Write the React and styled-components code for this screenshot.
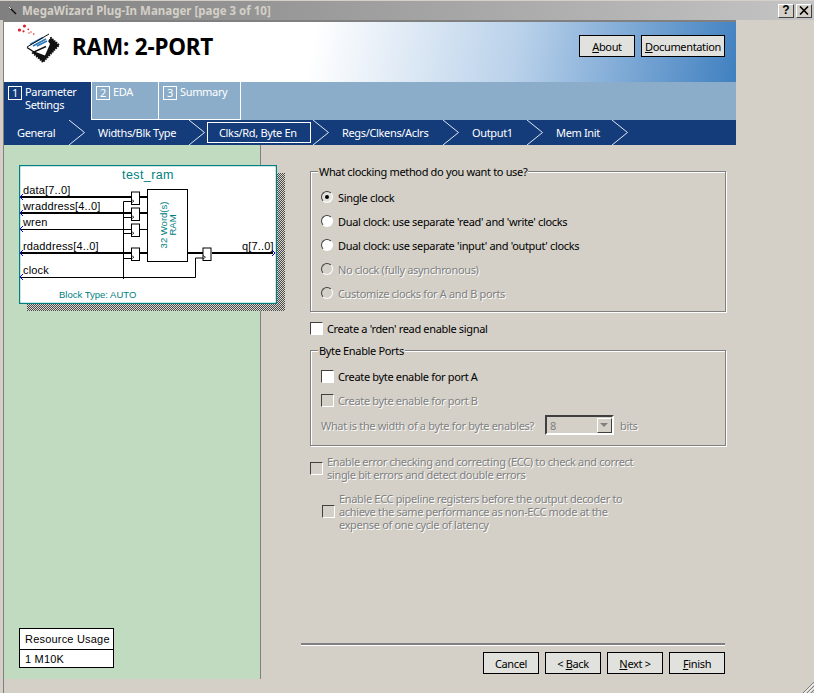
import React from "react";
import styled, { createGlobalStyle } from "styled-components";

const GlobalStyle = createGlobalStyle`
  html, body {
    margin: 0;
    padding: 0;
    background: #d4d0c8;
  }
  body {
    font-family: "Noto Sans", "Liberation Sans", sans-serif;
    font-size: 11px;
    letter-spacing: -0.34px;
    color: #000;
  }
`;

const Window = styled.div`
  width: 814px;
  height: 693px;
  box-sizing: border-box;
  display: flex;
  flex-direction: column;
  overflow: hidden;
  position: relative;
  background: #d4d0c8;
`;

const TitleBar = styled.div`
  height: 20px;
  flex: none;
  display: flex;
  align-items: center;
  padding: 0 2px 0 8px;
  box-sizing: border-box;
  background: linear-gradient(90deg, #808080, #c4c4c4);
  border-top: 1px solid #d4d0c8;
`;

const TitleText = styled.span`
  margin-left: 5px;
  font-weight: 700;
  font-size: 11.5px;
  letter-spacing: 0;
  color: #d4d0c8;
  flex: 1;
`;

const CaptionButton = styled.button`
  width: 16px;
  height: 14px;
  padding: 0;
  margin-left: 2px;
  display: flex;
  align-items: center;
  justify-content: center;
  background: #d4d0c8;
  border: 1px solid;
  border-color: #fff #404040 #404040 #fff;
  font: 700 12px "Liberation Sans", sans-serif;
  line-height: 11px;
  color: #000;
`;

const Frame = styled.div`
  flex: 1;
  margin-left: 3px;
  border-left: 1px solid #808080;
  border-top: 2px solid #808080;
  display: flex;
  flex-direction: column;
  width: 732px;
`;

const Header = styled.div`
  height: 60px;
  box-sizing: border-box;
  flex: none;
  display: flex;
  align-items: center;
  padding: 0 11px 12px 14px;
  background: linear-gradient(100deg, #fff 0, #fff 42%, #b9d1ea 70%, #4080c0 100%);
`;

const LogoSvg = styled.svg`
  align-self: flex-start;
  flex: none;
`;

const Heading = styled.h1`
  margin: 0 0 0 10px;
  flex: 1;
  font: 700 22.5px "Noto Sans", sans-serif;
  letter-spacing: -0.2px;
`;

const Button = styled.button`
  width: ${(p) => p.$w || 56}px;
  height: 22px;
  margin-left: 6px;
  padding: 0;
  background: #e1e2dd;
  border: 1px solid #000;
  font: inherit;
  letter-spacing: inherit;
  color: #000;
`;

const Key = styled.span`
  text-decoration: underline;
`;

const TabRow = styled.div`
  height: 38px;
  flex: none;
  display: flex;
  background: #8cadc9;
`;

const Tab = styled.div`
  width: ${(p) => p.$w}px;
  box-sizing: border-box;
  display: flex;
  gap: 3px;
  padding: 4px 0 0 4px;
  line-height: 13px;
  color: #fff;
  background: ${(p) => (p.$active ? "#143c7a" : "transparent")};
  border-right: ${(p) => (p.$active ? "none" : "1px solid #fff")};
  border-left: ${(p) => (p.$active ? "none" : "1px solid #fff")};
  border-bottom: ${(p) => (p.$active ? "none" : "1px solid #fff")};
  margin-left: ${(p) => (p.$active ? "0" : "-1px")};
  &:nth-child(2) {
    margin-left: 0;
  }
`;

const TabNumber = styled.span`
  width: 12px;
  height: 12px;
  flex: none;
  border: 1px solid #fff;
  text-align: center;
  font-size: 11px;
  line-height: 12px;
`;

const TabLabel = styled.div`
  margin-top: -1px;
`;

const NavRow = styled.div`
  height: 25px;
  flex: none;
  display: flex;
  align-items: center;
  background: #143c7a;
  color: #fff;
`;

const NavLabel = styled.div`
  width: ${(p) => p.$w}px;
  flex: none;
  box-sizing: border-box;
  height: ${(p) => (p.$active ? 21 : 25)}px;
  line-height: ${(p) => (p.$active ? 19 : 25)}px;
  padding-left: ${(p) => (p.$active ? 11 : 13)}px;
  margin: 0 ${(p) => (p.$active ? 2 : 0)}px;
  border: ${(p) => (p.$active ? "1px solid #fff" : "none")};
`;

const Chevron = styled.svg`
  width: 16px;
  height: 25px;
  flex: none;
`;

const Main = styled.div`
  flex: none;
  display: flex;
  height: 534px;
`;

const SidePane = styled.div`
  width: 257px;
  flex: none;
  box-sizing: border-box;
  background: #c0dbc0;
  border-right: 1px solid #808080;
  padding: 20px 0 11px 15px;
  display: flex;
  flex-direction: column;
  justify-content: space-between;
`;

const DiagramCard = styled.div`
  position: relative;
  width: 258px;
  height: 139px;
`;

const DiagramShadow = styled.div`
  position: absolute;
  left: 8px;
  top: 8px;
  width: 258px;
  height: 138px;
  background: repeating-conic-gradient(#4a4a4a 0 25%, #d8d8d0 0 50%) 0 0 / 2px 2px;
`;

const DiagramSvg = styled.svg`
  position: absolute;
  left: 0;
  top: 0;
  display: block;
  background: #fff;
`;

const UsageTable = styled.div`
  width: 95px;
  box-sizing: border-box;
  background: #fff;
  border: 1px solid #000;
  font: 11px "Liberation Sans", sans-serif;
  letter-spacing: 0.2px;
`;

const UsageHead = styled.div`
  height: 20px;
  line-height: 21px;
  padding-left: 5px;
  border-bottom: 1px solid #000;
`;

const UsageCell = styled.div`
  height: 17px;
  line-height: 18px;
  padding-left: 5px;
`;

const FormPane = styled.div`
  flex: 1;
  display: flex;
  flex-direction: column;
  padding: 26px 0 5px 49px;
  box-sizing: border-box;
`;

const Group = styled.div`
  position: relative;
  box-sizing: border-box;
  width: 416px;
  height: ${(p) => p.$h}px;
  margin-top: ${(p) => p.$mt || 0}px;
  padding: 13px 0 0 10px;
  border: 1px solid #808080;
  box-shadow: 1px 1px 0 #fff, inset 1px 1px 0 #fff;
`;

const Legend = styled.span`
  position: absolute;
  left: 7px;
  top: -8px;
  padding: 0 1px;
  background: #d4d0c8;
  line-height: 15px;
`;

const Row = styled.div`
  height: ${(p) => p.$h || 24}px;
  margin-top: ${(p) => p.$mt || 0}px;
  margin-left: ${(p) => p.$ml || 0}px;
  display: flex;
  align-items: center;
  gap: ${(p) => p.$gap || 5}px;
  color: ${(p) => (p.$off ? "#808080" : "#000")};
  text-shadow: ${(p) => (p.$off ? "1px 1px 0 #fff" : "none")};
  line-height: 13px;
`;

const RadioMark = styled.span`
  width: 12px;
  height: 12px;
  flex: none;
  box-sizing: border-box;
  border-radius: 50%;
  border: 1px solid;
  border-color: #404040 #fff #fff #404040;
  background: ${(p) => (p.$off ? "#d4d0c8" : p.$on ? "#e4e2dc" : "#fff")};
  display: flex;
  align-items: center;
  justify-content: center;
  &::after {
    content: "";
    width: 4px;
    height: 4px;
    border-radius: 50%;
    background: ${(p) => (p.$on ? "#000" : "transparent")};
  }
`;

const CheckMark = styled.span`
  width: 13px;
  height: 13px;
  flex: none;
  box-sizing: border-box;
  border: 1px solid;
  border-color: #404040 #fff #fff #404040;
  background: ${(p) => (p.$off ? "#d4d0c8" : "#fff")};
`;

const Combo = styled.div`
  width: 69px;
  height: 20px;
  box-sizing: border-box;
  margin-left: 5px;
  border: 2px solid;
  border-color: #404040 #fff #fff #404040;
  display: flex;
  align-items: center;
  justify-content: space-between;
  padding-left: 3px;
  text-shadow: none;
`;

const ComboArrow = styled.span`
  width: 15px;
  height: 15px;
  box-sizing: border-box;
  border: 1px solid;
  border-color: #fff #404040 #404040 #fff;
  display: flex;
  align-items: center;
  justify-content: center;
  &::after {
    content: "";
    border: 4px solid transparent;
    border-top: 4px solid #808080;
    border-bottom: none;
  }
`;

const Footer = styled.div`
  margin-top: auto;
  width: 424px;
  margin-left: -9px;
`;

const FooterRule = styled.div`
  height: 2px;
  background: #808080;
  border-bottom: 1px solid #fff;
`;

const FooterButtons = styled.div`
  display: flex;
  justify-content: flex-end;
  margin-top: 6px;
`;

const ResizeGrip = styled.svg`
  position: absolute;
  right: 0;
  bottom: 0;
  width: 12px;
  height: 12px;
`;

const tabs = [
  { n: 1, label: ["Parameter", "Settings"], w: 87, active: true },
  { n: 2, label: ["EDA"], w: 68 },
  { n: 3, label: ["Summary"], w: 83 },
];

const steps = [
  { label: "General", w: 65 },
  { label: "Widths/Blk Type", w: 104 },
  { label: "Clks/Rd, Byte En", w: 104, active: true },
  { label: "Regs/Clkens/Aclrs", w: 114 },
  { label: "Output1", w: 68 },
  { label: "Mem Init", w: 69 },
];

const radios = [
  { label: "Single clock", on: true },
  { label: "Dual clock: use separate 'read' and 'write' clocks" },
  { label: "Dual clock: use separate 'input' and 'output' clocks" },
  { label: "No clock (fully asynchronous)", off: true },
  { label: "Customize clocks for A and B ports", off: true },
];

const StepChevron = () => (
  <Chevron viewBox="0 0 16 25">
    <path d="M0 0 L15.5 12.5 L0 25" fill="none" stroke="#dfe7f2" strokeWidth="1" />
  </Chevron>
);

const Logo = () => (
  <LogoSvg width="44" height="44" viewBox="18 22 44 44">
    <g fill="#d8232a">
      <circle cx="19.5" cy="30" r="1.6" />
      <circle cx="24.5" cy="26" r="1.6" />
      <circle cx="23.5" cy="31.3" r="1.1" />
      <circle cx="28.3" cy="29.3" r="0.9" />
      <circle cx="31" cy="32" r="0.7" />
      <circle cx="33.7" cy="34" r="0.8" />
      <circle cx="29" cy="33" r="0.7" />
    </g>
    <path d="M33 53 L51 38 L59 45 L43 62 Z" fill="#111" stroke="#111" strokeWidth="2" strokeDasharray="1.5 1" />
    <path d="M33 51 L45 55.5 L50 44 L46 38 Z" fill="#fff" />
    <path d="M28 45 L48 34.5 L50 38 L47 43 L34 49 Z" fill="#fff" />
    <path d="M30 44.5 L43 37.5 M33 46 L46 39 M37 46 L47 41" stroke="#2a78b8" strokeWidth="1.6" />
    <path d="M27 47 L49 34" stroke="#111" strokeWidth="1" />
    <path d="M27 47.5 L34 52 L46 46.5" fill="none" stroke="#111" strokeWidth="1.4" />
  </LogoSvg>
);

const Register = ({ y }) => (
  <g>
    <rect x="131.5" y={y} width="8" height="12.5" fill="#fff" stroke="#000" />
    <path d={`M131.5 ${y + 7.5} l2.5 1.7 l-2.5 1.7`} fill="none" stroke="#000" strokeWidth="0.7" />
  </g>
);

const Port = ({ y }) => (
  <path d={`M23 ${y - 3} L20 ${y} L23 ${y + 3}`} fill="none" stroke="#0000e0" />
);

const Diagram = () => (
  <DiagramSvg width="258" height="139" viewBox="19 165 258 139">
    <rect x="19.5" y="165.5" width="257" height="138" fill="#fff" stroke="#008080" strokeWidth="1.4" />
    <text x="148" y="179" textAnchor="middle" fontFamily="Liberation Sans" fontSize="12.5" letterSpacing="0.4" fill="#008080">test_ram</text>
    <g stroke="#000" fill="none">
      <path d="M20 197 H132 M140 197 H147 M20 213 H132 M140 213 H147 M20 253 H132 M140 253 H147 M187 253 H203 M212 253 H273" strokeWidth="2" />
      <path d="M20 229.5 H132 M140 229.5 H147 M20 277.5 H195.5 V258 H203 M123.5 201.5 V279 M123.5 201.5 H132 M123.5 217.5 H132 M123.5 233.5 H132 M123.5 258.5 H132" />
    </g>
    <rect x="147.5" y="189.5" width="40" height="72" fill="#fff" stroke="#000" />
    <Register y={192} />
    <Register y={208} />
    <Register y={224} />
    <Register y={248} />
    <g transform="translate(71.5 0)"><Register y={248} /></g>
    <Port y={197} />
    <Port y={213} />
    <Port y={229} />
    <Port y={253} />
    <Port y={277} />
    <path d="M272 250 L275 253 L272 256" fill="none" stroke="#0000e0" />
    <g fontFamily="Liberation Sans" fontSize="11" letterSpacing="0.15" fill="#000">
      <text x="23" y="194">data[7..0]</text>
      <text x="23" y="210">wraddress[4..0]</text>
      <text x="23" y="226">wren</text>
      <text x="23" y="250">rdaddress[4..0]</text>
      <text x="23" y="274">clock</text>
      <text x="242" y="250">q[7..0]</text>
    </g>
    <g fontFamily="Liberation Sans" fontSize="9.5" letterSpacing="0" fill="#008080" textAnchor="middle">
      <text transform="translate(167 225) rotate(-90)">32 Word(s)</text>
      <text transform="translate(176 225) rotate(-90)">RAM</text>
    </g>
    <text x="59" y="298" fontFamily="Liberation Sans" fontSize="9.5" letterSpacing="0" fill="#008080">Block Type: AUTO</text>
  </DiagramSvg>
);

export default function App() {
  return (
    <Window>
      <GlobalStyle />
      <TitleBar>
        <svg width="9" height="9" viewBox="0 0 9 9">
          <path d="M2 2 L8 8" stroke="#111" strokeWidth="1.4" />
          <path d="M1 1 L3 3" stroke="#eee" strokeWidth="1" />
        </svg>
        <TitleText>MegaWizard Plug-In Manager [page 3 of 10]</TitleText>
        <CaptionButton>?</CaptionButton>
        <CaptionButton>
          <svg width="10" height="9" viewBox="0 0 10 9">
            <path d="M1 0.5 L9 8.5 M9 0.5 L1 8.5" stroke="#000" strokeWidth="1.6" />
          </svg>
        </CaptionButton>
      </TitleBar>
      <Frame>
        <Header>
          <Logo />
          <Heading>RAM: 2-PORT</Heading>
          <Button><Key>A</Key>bout</Button>
          <Button $w={84}><Key>D</Key>ocumentation</Button>
        </Header>
        <TabRow>
          {tabs.map((t) => (
            <Tab key={t.n} $w={t.w} $active={t.active}>
              <TabNumber>{t.n}</TabNumber>
              <TabLabel>
                {t.label.map((l) => (
                  <div key={l}>{l}</div>
                ))}
              </TabLabel>
            </Tab>
          ))}
        </TabRow>
        <NavRow>
          {steps.map((s) => (
            <React.Fragment key={s.label}>
              <NavLabel $w={s.w} $active={s.active}>{s.label}</NavLabel>
              <StepChevron />
            </React.Fragment>
          ))}
        </NavRow>
        <Main>
          <SidePane>
            <DiagramCard>
              <DiagramShadow />
              <Diagram />
            </DiagramCard>
            <UsageTable>
              <UsageHead>Resource Usage</UsageHead>
              <UsageCell>1 M10K</UsageCell>
            </UsageTable>
          </SidePane>
          <FormPane>
            <Group $h={141}>
              <Legend>What clocking method do you want to use?</Legend>
              {radios.map((r) => (
                <Row key={r.label} $off={r.off}>
                  <RadioMark $on={r.on} $off={r.off} />
                  {r.label}
                </Row>
              ))}
            </Group>
            <Row $mt={4} $gap={4}>
              <CheckMark />
              Create a 'rden' read enable signal
            </Row>
            <Group $h={96} $mt={10}>
              <Legend>Byte Enable Ports</Legend>
              <Row $gap={4}>
                <CheckMark />
                Create byte enable for port A
              </Row>
              <Row $off $gap={4}>
                <CheckMark $off />
                Create byte enable for port B
              </Row>
              <Row $off $gap={6} $mt={1}>
                What is the width of a byte for byte enables?
                <Combo>
                  8
                  <ComboArrow />
                </Combo>
                bits
              </Row>
            </Group>
            <Row $off $mt={9} $h={26} $gap={4}>
              <CheckMark $off />
              <div>
                Enable error checking and correcting (ECC) to check and correct
                <br />
                single bit errors and detect double errors
              </div>
            </Row>
            <Row $off $mt={11} $h={39} $ml={12} $gap={4}>
              <CheckMark $off />
              <div>
                Enable ECC pipeline registers before the output decoder to
                <br />
                achieve the same performance as non-ECC mode at the
                <br />
                expense of one cycle of latency
              </div>
            </Row>
            <Footer>
              <FooterRule />
              <FooterButtons>
                <Button>Cancel</Button>
                <Button>&lt; <Key>B</Key>ack</Button>
                <Button><Key>N</Key>ext &gt;</Button>
                <Button><Key>F</Key>inish</Button>
              </FooterButtons>
            </Footer>
          </FormPane>
        </Main>
      </Frame>
      <ResizeGrip viewBox="0 0 12 12">
        <path d="M12 1 L1 12 M12 5 L5 12 M12 9 L9 12" stroke="#808080" strokeWidth="1" />
        <path d="M12 2.5 L2.5 12 M12 6.5 L6.5 12" stroke="#fff" strokeWidth="1" />
      </ResizeGrip>
    </Window>
  );
}
